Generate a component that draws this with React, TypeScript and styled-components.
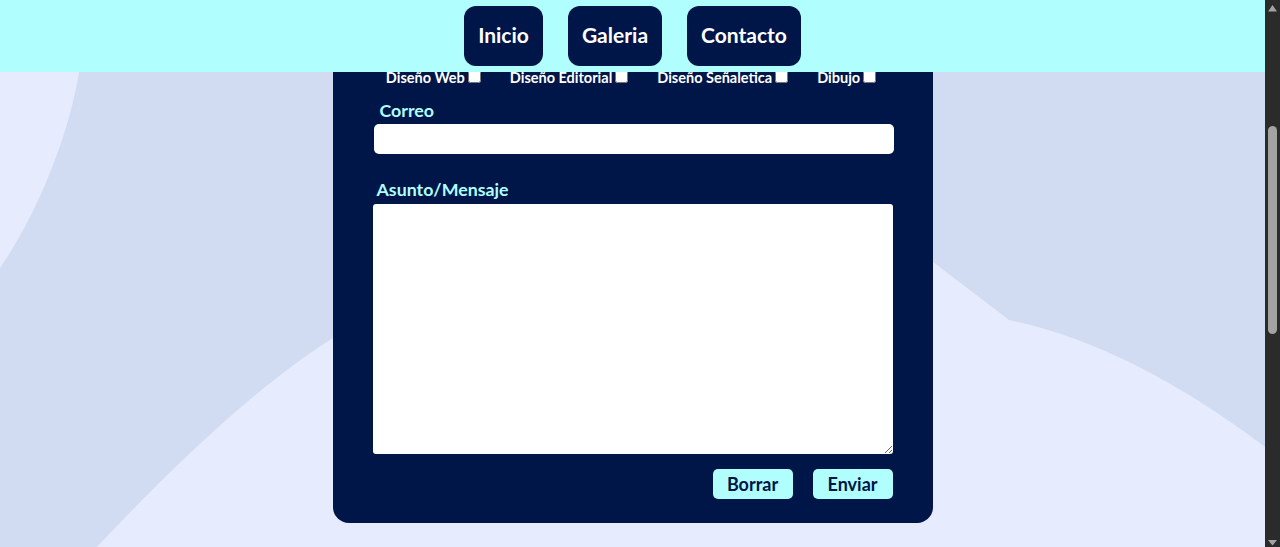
import React from "react";
import styled, { createGlobalStyle } from "styled-components";

const NAVY = "#001548";
const CYAN = "#b0fefe";
const LIGHT = "#e6ecfd";
const WAVE = "#d1dcf3";
const FONT = `Lato, "Noto Sans", "Liberation Sans", sans-serif`;

const waveSvg = `<svg xmlns='http://www.w3.org/2000/svg' viewBox='0 0 1265 547' preserveAspectRatio='none'><rect width='1265' height='547' fill='${LIGHT}'/><path fill='${WAVE}' d='M95 0 L79 72 C70 130 40 210 0 268 L0 547 L97 547 C160 480 250 390 333 338 C500 240 800 200 933 262 L1009 320 Q1130 345 1265 447 L1265 0 Z'/></svg>`;
const waveUrl = `url("data:image/svg+xml,${encodeURIComponent(waveSvg)}")`;

const GlobalStyle = createGlobalStyle`
  html, body {
    margin: 0;
    height: 547px;
    overflow: hidden;
  }
  body {
    font-family: ${FONT};
    color: #ffffff;
    background: ${LIGHT};
  }
  * { box-sizing: border-box; }
`;

const Shell = styled.div`
  display: flex;
  width: 1280px;
  height: 547px;
`;

const PageArea = styled.div`
  position: relative;
  flex: 1;
  height: 547px;
  overflow: hidden;
  background-color: ${LIGHT};
  background-image: ${waveUrl};
  background-repeat: no-repeat;
  background-size: 100% 100%;
`;

const Header = styled.header`
  position: absolute;
  top: 0;
  left: 0;
  right: 0;
  z-index: 10;
  height: 72px;
  background: ${CYAN};
  display: flex;
  justify-content: center;
  align-items: center;
  gap: 25px;
`;

const NavButton = styled.a`
  height: 60px;
  padding: 0 14px 3px;
  display: flex;
  align-items: center;
  justify-content: center;
  background: ${NAVY};
  color: #ffffff;
  border-radius: 12px;
  font-size: 21px;
  font-weight: 700;
  text-decoration: none;
`;

const Card = styled.form`
  width: 600px;
  margin: 0 auto;
  background: ${NAVY};
  border-radius: 16px;
  padding: 70px 40px 24px;
  display: flex;
  flex-direction: column;
`;

const CheckRow = styled.div`
  height: 16px;
  display: flex;
  justify-content: center;
  align-items: center;
  gap: 29px;
  margin-right: 3px;
`;

const CheckItem = styled.label`
  display: flex;
  align-items: center;
  gap: 3px;
  font-size: 14.5px;
  line-height: 16px;
  font-weight: 700;
  color: #ffffff;
  white-space: nowrap;
`;

const Check = styled.input`
  color-scheme: light;
  width: 13px;
  height: 13px;
  margin: 0 0 3px;
`;

const FieldLabel = styled.label<{ $top: number; $left: number }>`
  display: block;
  margin-top: ${(p) => p.$top}px;
  margin-left: ${(p) => p.$left}px;
  font-size: 17.8px;
  line-height: 22px;
  font-weight: 700;
  color: ${CYAN};
`;

const TextInput = styled.input`
  color-scheme: light;
  margin-top: 3px;
  margin-left: 1px;
  width: 520px;
  height: 30px;
  border: none;
  border-radius: 5px;
  background: #ffffff;
  outline: none;
`;

const MessageArea = styled.textarea`
  color-scheme: light;
  margin-top: 4px;
  width: 520px;
  height: 250px;
  border: none;
  border-radius: 3px;
  background: #ffffff;
  outline: none;
  resize: both;
`;

const Actions = styled.div`
  margin-top: 15px;
  display: flex;
  justify-content: flex-end;
  gap: 20px;
`;

const ActionButton = styled.button`
  width: 80px;
  height: 30px;
  border: none;
  border-radius: 5px;
  background: ${CYAN};
  color: ${NAVY};
  font-family: ${FONT};
  font-size: 18px;
  font-weight: 700;
  padding: 0;
  cursor: pointer;
`;

const ScrollBar = styled.div`
  width: 15px;
  height: 547px;
  background: #2b2b2b;
  display: flex;
  flex-direction: column;
`;

const ArrowBox = styled.div`
  width: 15px;
  height: 15px;
  flex: none;
  display: flex;
`;

const Track = styled.div`
  flex: 1;
  display: flex;
  flex-direction: column;
  align-items: center;
`;

const Thumb = styled.div<{ $offset: number; $size: number }>`
  margin-top: ${(p) => p.$offset}px;
  width: 9px;
  height: ${(p) => p.$size}px;
  border-radius: 5px;
  background: #a3a3a3;
`;

const services = ["Diseño Web", "Diseño Editorial", "Diseño Señaletica", "Dibujo"];

export default function App() {
  return (
    <>
      <GlobalStyle />
      <Shell>
        <PageArea>
          <Header>
            <NavButton href="#">Inicio</NavButton>
            <NavButton href="#">Galeria</NavButton>
            <NavButton href="#">Contacto</NavButton>
          </Header>
          <Card onSubmit={(e) => e.preventDefault()}>
            <CheckRow>
              {services.map((s) => (
                <CheckItem key={s}>
                  {s}
                  <Check type="checkbox" />
                </CheckItem>
              ))}
            </CheckRow>
            <FieldLabel $top={13} $left={7}>Correo</FieldLabel>
            <TextInput type="email" />
            <FieldLabel $top={24} $left={4}>Asunto/Mensaje</FieldLabel>
            <MessageArea />
            <Actions>
              <ActionButton type="reset">Borrar</ActionButton>
              <ActionButton type="submit">Enviar</ActionButton>
            </Actions>
          </Card>
        </PageArea>
        <ScrollBar>
          <ArrowBox>
            <svg width="15" height="15" viewBox="0 0 15 15">
              <polygon points="3,11.5 12,11.5 7.5,5" fill="#a3a3a3" />
            </svg>
          </ArrowBox>
          <Track>
            <Thumb $offset={111} $size={208} />
          </Track>
          <ArrowBox>
            <svg width="15" height="15" viewBox="0 0 15 15">
              <polygon points="3,8 12,8 7.5,13.5" fill="#a3a3a3" />
            </svg>
          </ArrowBox>
        </ScrollBar>
      </Shell>
    </>
  );
}
